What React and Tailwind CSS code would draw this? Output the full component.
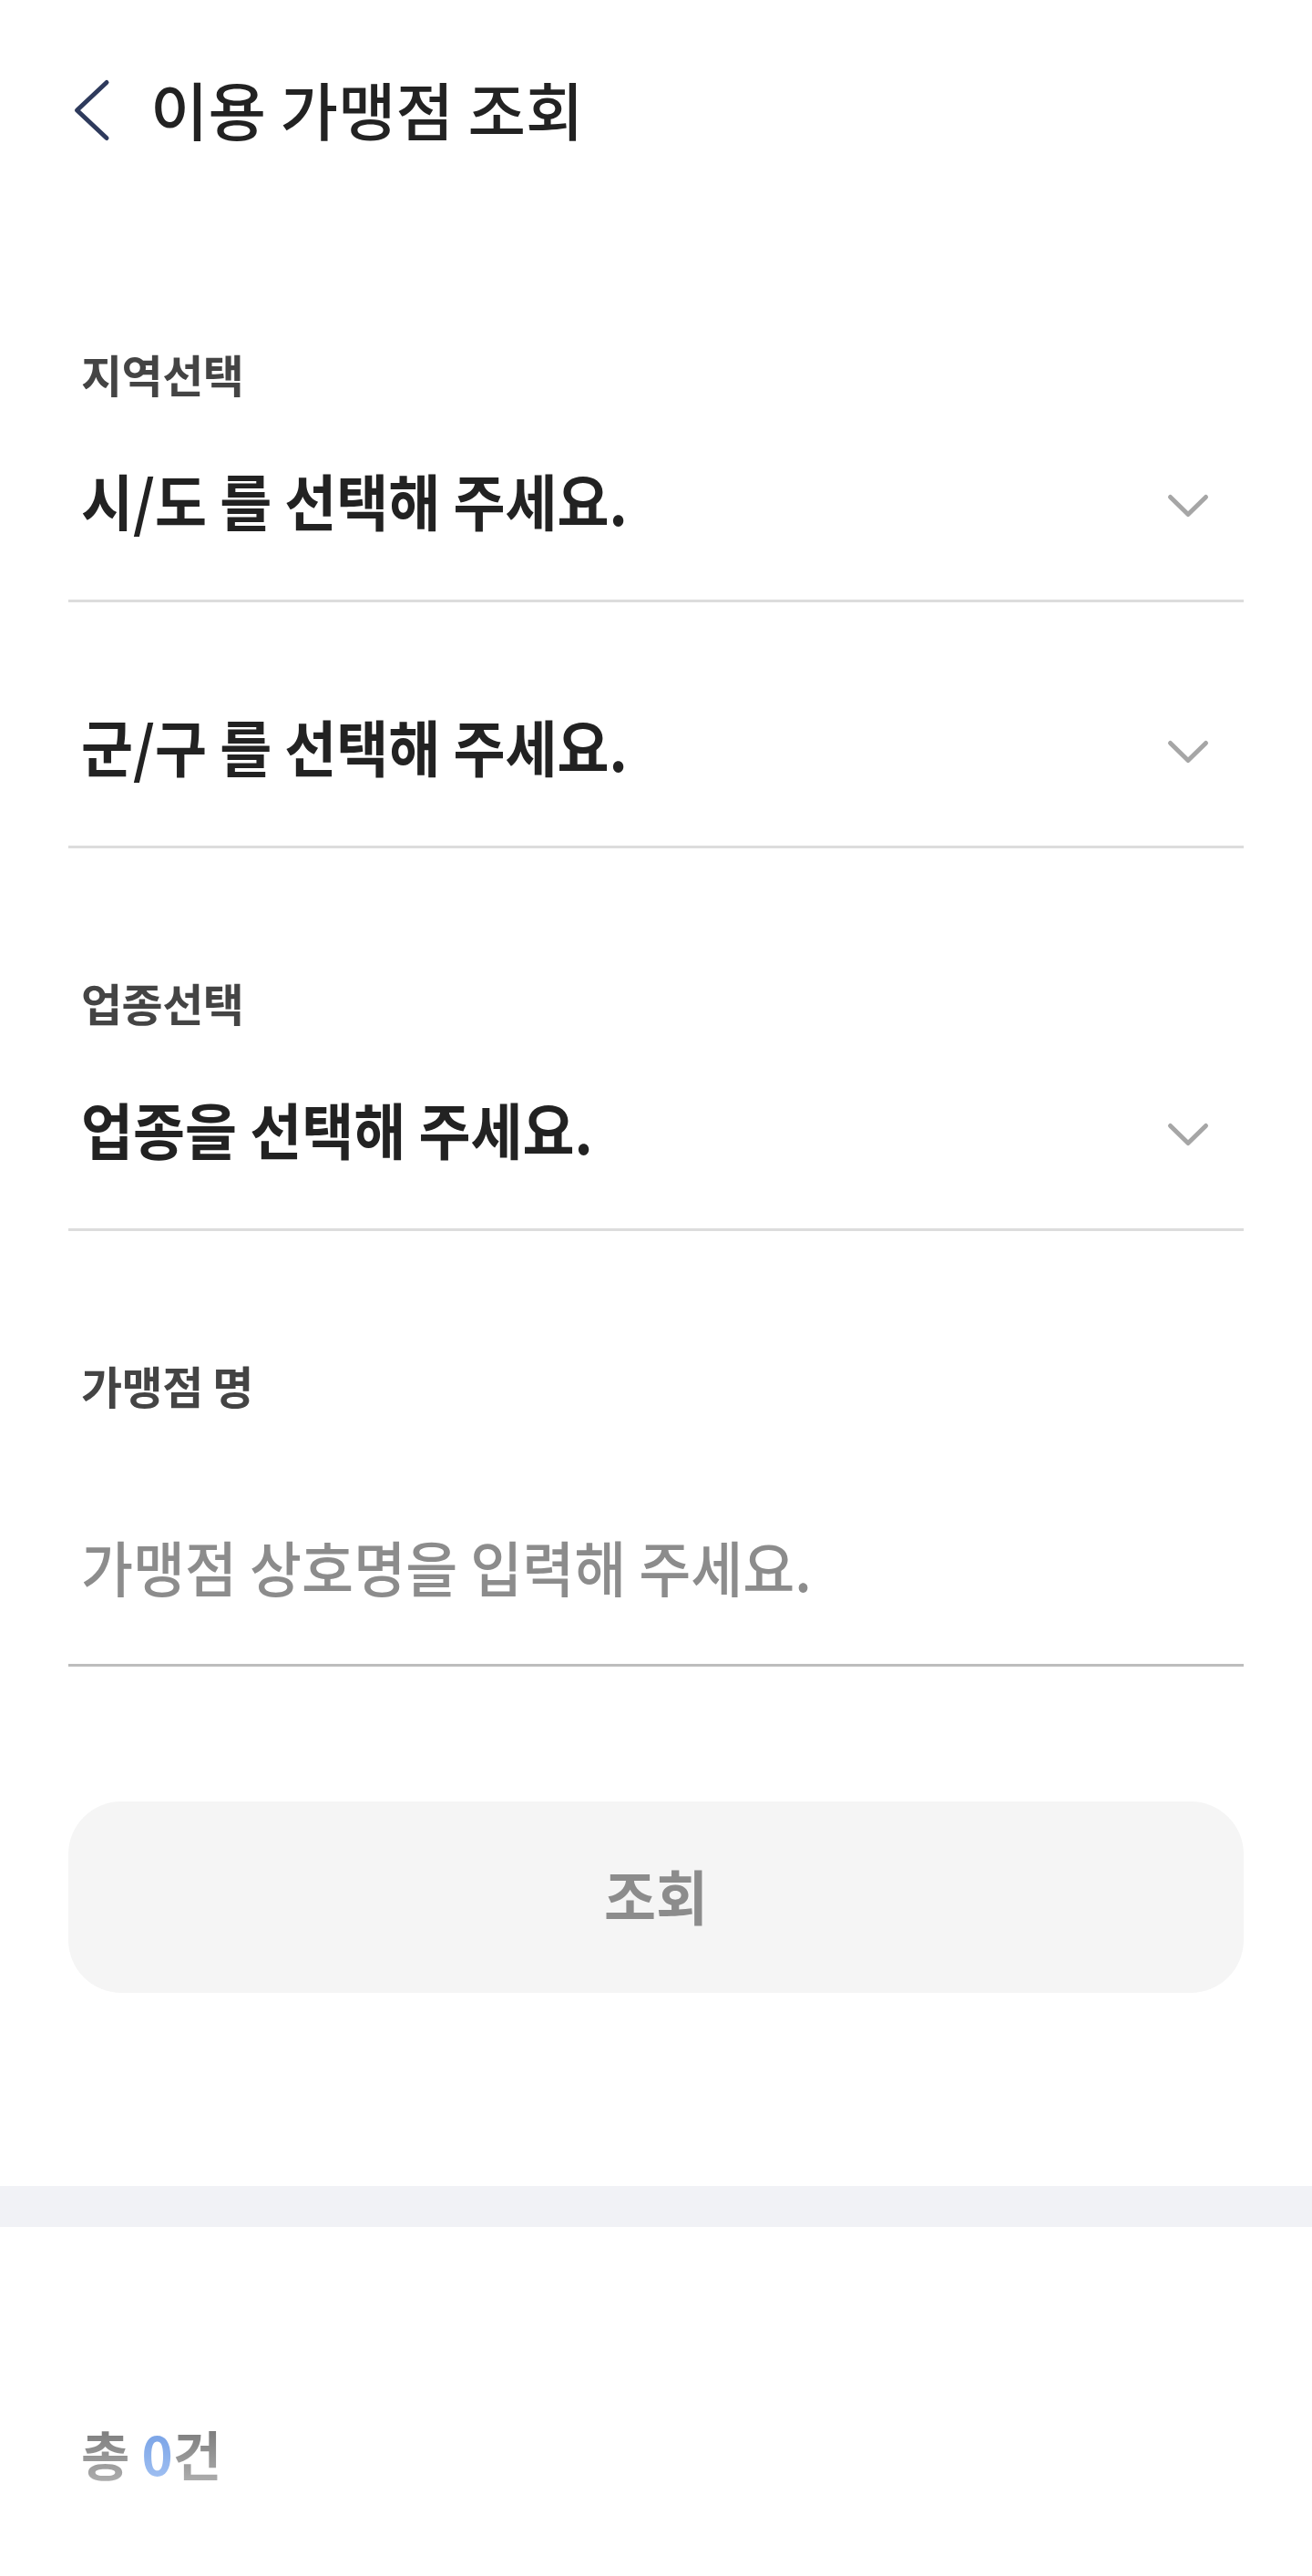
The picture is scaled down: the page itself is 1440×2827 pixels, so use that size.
import { useState } from 'react';

const FONT = "font-['Noto_Sans_CJK_KR','Noto_Sans',sans-serif]";

function DownChevron() {
    return (
        <svg width="48" height="28" viewBox="0 0 48 28" fill="none" className="shrink-0">
            <path d="M4.5 4.5L24 23.5L43.5 4.5" stroke="#a6a6a6" strokeWidth="5" strokeLinecap="round" strokeLinejoin="round" />
        </svg>
    );
}

function FieldLabel({ children, className = '' }) {
    return (
        <div className={'flex h-[64px] items-center pb-[6px] pl-[14px] ' + className}>
            <span className="inline-block text-[49px] font-bold leading-none tracking-[-0.5px] text-[#444444]">
                {children}
            </span>
        </div>
    );
}

function SelectRow({ text, className = '' }) {
    return (
        <button
            type="button"
            className={'flex h-[210px] w-full items-center justify-between border-b-[3px] border-[#dcdcdc] pl-[14px] pr-[37px] text-left ' + className}
        >
            <span className="inline-block -translate-y-[7px] scale-y-[1.08] text-[62px] font-bold leading-none text-[#222222]">{text}</span>
            <DownChevron />
        </button>
    );
}

export default function App() {
    const [storeName, setStoreName] = useState('');

    return (
        <div className={'min-h-[2827px] w-full bg-white ' + FONT}>
            {/* Header */}
            <header className="flex h-[242px] items-center pb-[4px] pl-[80px]">
                <button type="button" className="shrink-0 translate-y-[2px]">
                    <svg width="42" height="70" viewBox="0 0 42 70" fill="none">
                        <path d="M37 4.5L4.5 35L37 65.5" stroke="#2e3a5c" strokeWidth="5" strokeLinecap="round" strokeLinejoin="round" />
                    </svg>
                </button>
                <h1 className="ml-[43px] inline-block text-[69px] font-medium leading-none text-[#222222]">
                    이용 가맹점 조회
                </h1>
            </header>

            {/* Search form */}
            <div className="px-[75px]">
                <FieldLabel className="mt-[138px]">지역선택</FieldLabel>
                <SelectRow className="mt-[7px]" text="시/도 를 선택해 주세요." />
                <SelectRow className="mt-[60px]" text="군/구 를 선택해 주세요." />

                <FieldLabel className="mt-[139px]">업종선택</FieldLabel>
                <SelectRow className="mt-[7px]" text="업종을 선택해 주세요." />

                <FieldLabel className="mt-[139px]">가맹점 명</FieldLabel>
                <div className="mt-[66px] flex h-[209px] items-center border-b-[3px] border-[#bdbdbd] pb-[10px] pl-[14px]">
                    <input
                        value={storeName}
                        onChange={(e) => setStoreName(e.target.value)}
                        placeholder="가맹점 상호명을 입력해 주세요."
                        className="h-[88px] w-full scale-y-[1.07] bg-transparent text-[62px] font-medium text-[#222222] outline-none placeholder:text-[#8c8c8c]"
                    />
                </div>

                <button
                    type="button"
                    className="mt-[148px] flex h-[210px] w-full items-center justify-center rounded-[58px] bg-[#f5f5f5] pb-[6px]"
                >
                    <span className="inline-block scale-y-[1.05] text-[62px] font-bold leading-none text-[#8c8c8c]">조회</span>
                </button>
            </div>

            {/* Divider band */}
            <div className="mt-[212px] h-[45px] w-full bg-[#f1f2f6]" />

            {/* Result count */}
            <div className="mt-[219px] flex h-[64px] items-center px-[75px] pb-[6px] pl-[89px]">
                <p className="inline-block text-[58px] font-semibold leading-none">
                    <span className="bg-linear-to-b from-[#707070] to-[#b6b6b6] bg-clip-text text-transparent">총 </span>
                    <span className="bg-linear-to-b from-[#6b98e2] to-[#aac7f4] bg-clip-text text-transparent">0</span>
                    <span className="bg-linear-to-b from-[#707070] to-[#b6b6b6] bg-clip-text text-transparent">건</span>
                </p>
            </div>
        </div>
    );
}
